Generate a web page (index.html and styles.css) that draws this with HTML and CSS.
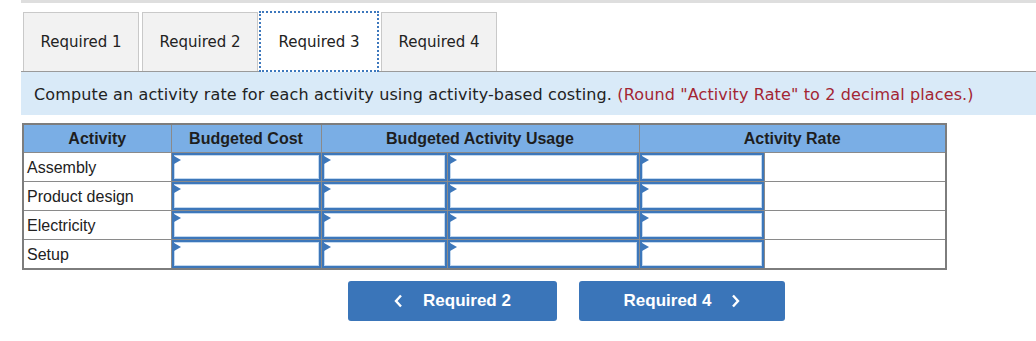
FILE: index.html
```html
<!DOCTYPE html>
<html lang="en">
<head>
  <meta charset="UTF-8" />
  <title>Activity rates</title>
  <link rel="stylesheet" href="styles.css">
</head>
<body>
  <div class="page">
    <div class="topbar"></div>

    <ul class="tabs">
      <li class="tab">Required 1</li>
      <li class="tab">Required 2</li>
      <li class="tab active">Required 3</li>
      <li class="tab">Required 4</li>
    </ul>

    <div class="prompt">
      <p>Compute an activity rate for each activity using activity-based costing. <span class="note">(Round "Activity Rate" to 2 decimal places.)</span></p>
    </div>

    <table class="grid">
      <colgroup>
        <col class="c-name" />
        <col class="c-cost" />
        <col class="c-usage1" />
        <col class="c-usage2" />
        <col class="c-rate1" />
        <col class="c-rate2" />
      </colgroup>
      <thead>
        <tr>
          <th>Activity</th>
          <th>Budgeted Cost</th>
          <th colspan="2">Budgeted Activity Usage</th>
          <th colspan="2">Activity Rate</th>
        </tr>
      </thead>
      <tbody>
        <!-- one row per activity -->
        <tr>
          <td class="name">Assembly</td>
          <td class="entry"><div class="field"></div></td>
          <td class="entry"><div class="field"></div></td>
          <td class="entry"><div class="field"></div></td>
          <td class="entry"><div class="field"></div></td>
          <td></td>
        </tr>
        <tr>
          <td class="name">Product design</td>
          <td class="entry"><div class="field"></div></td>
          <td class="entry"><div class="field"></div></td>
          <td class="entry"><div class="field"></div></td>
          <td class="entry"><div class="field"></div></td>
          <td></td>
        </tr>
        <tr>
          <td class="name">Electricity</td>
          <td class="entry"><div class="field"></div></td>
          <td class="entry"><div class="field"></div></td>
          <td class="entry"><div class="field"></div></td>
          <td class="entry"><div class="field"></div></td>
          <td></td>
        </tr>
        <tr>
          <td class="name">Setup</td>
          <td class="entry"><div class="field"></div></td>
          <td class="entry"><div class="field"></div></td>
          <td class="entry"><div class="field"></div></td>
          <td class="entry"><div class="field"></div></td>
          <td></td>
        </tr>
      </tbody>
    </table>

    <div class="nav">
      <button class="nav-btn prev">
        <svg width="9" height="14" viewBox="0 0 9 14"><path d="M7 1.5 L2 7 L7 12.5" fill="none" stroke="#fff" stroke-width="2.4"/></svg>
        <span>Required 2</span>
      </button>
      <button class="nav-btn next">
        <span>Required 4</span>
        <svg width="9" height="14" viewBox="0 0 9 14"><path d="M2 1.5 L7 7 L2 12.5" fill="none" stroke="#fff" stroke-width="2.4"/></svg>
      </button>
    </div>
  </div>
</body>
</html>
```

FILE: styles.css
```css
body {
  margin: 0;
  background: #fff;
  font-family: "DejaVu Sans", Verdana, sans-serif;
  color: #222;
}
.page {
  padding-left: 21px;
}
.topbar {
  height: 3px;
  background: #dedede;
}

/* tab strip */
.tabs {
  display: flex;
  gap: 3px;
  list-style: none;
  margin: 9px 0 0;
  padding: 0 0 0 2px;
  border-bottom: 1px solid #9a9a9a;
}
.tab {
  box-sizing: border-box;
  width: 116px;
  height: 59px;
  display: flex;
  align-items: center;
  justify-content: center;
  background: #f2f2f2;
  border: 1px solid #c9c9c9;
  border-bottom: none;
  font-size: 15px;
  color: #222;
}
.tab.active {
  background: #fff;
  border: 2px dotted #3d78bd;
  width: 120px;
  height: 61px;
  margin: -1px -1px -1px -2px;
}

.prompt {
  background: #d9eaf8;
  height: 43px;
  padding-left: 13px;
  display: flex;
  align-items: center;
  font-size: 16px;
  letter-spacing: 0.13px;
  color: #222;
}
.prompt p {
  margin: 1px 0 0;
}
.note {
  color: #a32533;
}

/* activity table */
.grid {
  border-collapse: collapse;
  margin-top: 8px;
  margin-left: 1px;
  border: 2px solid #7d7d7d;
  font-family: "Liberation Sans", Arial, sans-serif;
  font-size: 16px;
}
.c-name { width: 148px; }
.c-cost { width: 150px; }
.c-usage1 { width: 126px; }
.c-usage2 { width: 192px; }
.c-rate1 { width: 125px; }
.c-rate2 { width: 182px; }
.grid th,
.grid td {
  border: 1px solid #8a8a8a;
  padding: 0;
}
.grid th {
  background: #7aaee5;
  height: 26px;
  padding-top: 1px;
  font-weight: bold;
  color: #1e1e1e;
}
.grid td {
  height: 28px;
}
.grid td.name {
  height: 27px;
  padding: 1px 0 0 3px;
  color: #222;
}
.grid td.entry {
  padding: 0;
}
.field {
  position: relative;
  height: 24px;
  border: 2px solid #3d77ba;
  box-shadow: inset 0 0 0 1px #c2d8ef;
  background: #fff;
}
.field::before {
  content: "";
  position: absolute;
  left: 0;
  top: 1px;
  border-left: 7px solid #3d77ba;
  border-top: 4px solid transparent;
  border-bottom: 4px solid transparent;
}

/* previous / next buttons */
.nav {
  display: flex;
  gap: 22px;
  margin: 11px 0 0 327px;
}
.nav-btn {
  display: flex;
  align-items: center;
  justify-content: center;
  gap: 20px;
  height: 40px;
  border: none;
  border-radius: 3px;
  background: #3a75b9;
  color: #fff;
  font-family: "Liberation Sans", Arial, sans-serif;
  font-weight: bold;
  font-size: 17px;
  cursor: pointer;
}
.nav-btn.prev {
  width: 209px;
}
.nav-btn.next {
  width: 206px;
}
```
